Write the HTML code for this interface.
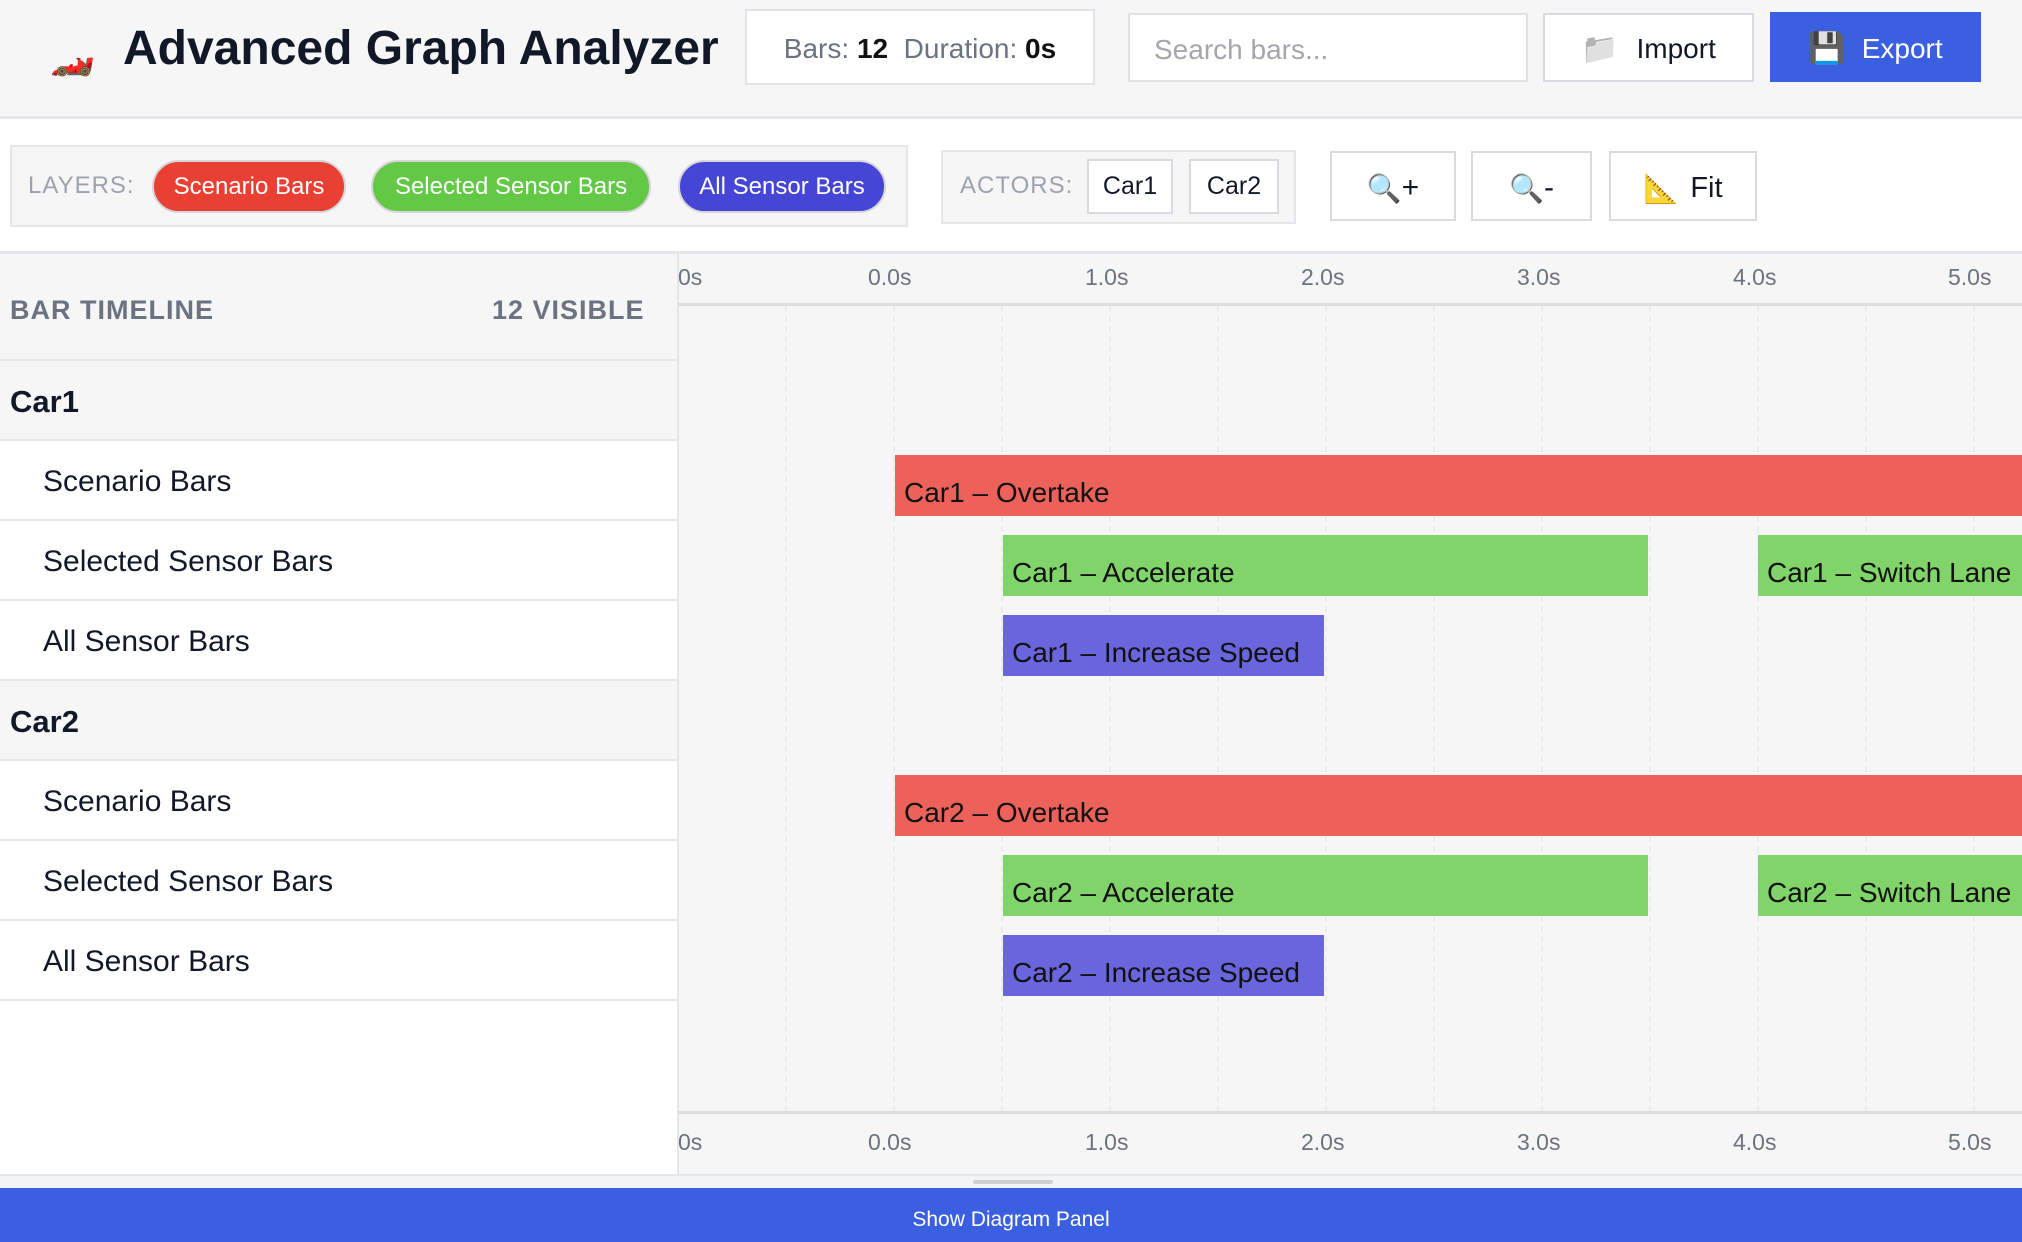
<!DOCTYPE html>
<html><head><meta charset="utf-8">
<style>
*{box-sizing:border-box;margin:0;padding:0}
body{width:2022px;height:1242px;overflow:hidden;background:#fff;font-family:"Liberation Sans",sans-serif;color:#111827;position:relative}
.a{position:absolute}
.hdr{left:0;top:0;width:2022px;height:119px;background:#f6f6f7;border-bottom:3px solid #e5e5ea}
.box{border:2px solid #e1e2e6;background:#fff}
.flex{display:flex;align-items:center;justify-content:center}
.pill{border-radius:28px;color:#fff;font-size:24px;border:2px solid #d6d6da}
.btn{border:2px solid #d9dadf;background:#fff;font-size:28px}
.row{left:0;width:677px;height:80px;border-bottom:2px solid #e5e5ea;display:flex;align-items:center;font-size:30px;padding-top:4px}
.grp{background:#f6f6f7;font-weight:bold;padding-left:10px;font-size:31px}
.sub{background:#fff;padding-left:43px}
.bar{height:61px;font-size:28px;color:#111;padding:22px 0 0 9px;white-space:nowrap;overflow:hidden}
.tl{font-size:23px;color:#6b7280}
.g{position:absolute;width:0;border-left:2px dashed #ececef;top:306px;height:806px}
</style></head><body>
<div class="a hdr"></div>
<div class="a" style="left:50px;top:36px;font-size:36px">🏎️</div>
<div class="a" style="left:123px;top:21px;font-size:48px;font-weight:bold;color:#111827">Advanced Graph Analyzer</div>
<div class="a box flex" style="left:745px;top:9px;width:350px;height:76px;font-size:28px;color:#6b7280;padding-top:4px">Bars:&nbsp;<b style="color:#111">12</b>&nbsp;&nbsp;Duration:&nbsp;<b style="color:#111">0s</b></div>
<div class="a box" style="left:1128px;top:13px;width:400px;height:69px;font-size:28px;color:#a3a6ad;padding:19px 0 0 24px">Search bars...</div>
<div class="a btn flex" style="left:1543px;top:13px;width:211px;height:69px;padding-top:3px"><span style="font-size:30px;margin-right:18px;filter:grayscale(1)">📁</span>Import</div>
<div class="a flex" style="left:1770px;top:12px;width:211px;height:70px;background:#3a5fe0;color:#fff;font-size:28px;padding-top:3px"><span style="font-size:30px;margin-right:16px">💾</span>Export</div>

<div class="a" style="left:10px;top:145px;width:898px;height:82px;background:#f6f6f7;border:2px solid #e5e5ea"></div>
<div class="a" style="left:28px;top:172px;font-size:24px;color:#9ca3af;letter-spacing:1px">LAYERS:</div>
<div class="a pill flex" style="left:152px;top:160px;width:194px;height:53px;background:#ea4034">Scenario Bars</div>
<div class="a pill flex" style="left:371px;top:160px;width:280px;height:53px;background:#63c846">Selected Sensor Bars</div>
<div class="a pill flex" style="left:678px;top:160px;width:208px;height:53px;background:#4545d6">All Sensor Bars</div>

<div class="a" style="left:941px;top:150px;width:355px;height:74px;background:#f6f6f7;border:2px solid #e5e5ea"></div>
<div class="a" style="left:960px;top:172px;font-size:24px;color:#9ca3af;letter-spacing:1px">ACTORS:</div>
<div class="a btn flex" style="left:1087px;top:159px;width:86px;height:55px;font-size:25px">Car1</div>
<div class="a btn flex" style="left:1189px;top:159px;width:90px;height:55px;font-size:25px">Car2</div>
<div class="a btn flex" style="left:1330px;top:151px;width:126px;height:70px;font-size:30px;padding-top:4px"><span style="font-size:28px">🔍</span>+</div>
<div class="a btn flex" style="left:1471px;top:151px;width:121px;height:70px;font-size:30px;padding-top:4px"><span style="font-size:28px">🔍</span>-</div>
<div class="a btn flex" style="left:1609px;top:151px;width:148px;height:70px;font-size:29px;padding-top:4px"><span style="font-size:28px;margin-right:12px">📐</span>Fit</div>

<div class="a" style="left:0;top:251px;width:2022px;height:3px;background:#e5e5ea"></div>
<div class="a" style="left:0;top:254px;width:677px;height:107px;background:#f6f6f7;border-bottom:2px solid #e5e5ea"></div>
<div class="a" style="left:10px;top:295px;font-size:27px;font-weight:bold;color:#6b7280;letter-spacing:1px">BAR TIMELINE</div>
<div class="a" style="left:492px;top:295px;font-size:27px;font-weight:bold;color:#6b7280;letter-spacing:1px">12 VISIBLE</div>

<div class="a row grp" style="top:361px">Car1</div>
<div class="a row sub" style="top:441px">Scenario Bars</div>
<div class="a row sub" style="top:521px">Selected Sensor Bars</div>
<div class="a row sub" style="top:601px">All Sensor Bars</div>
<div class="a row grp" style="top:681px">Car2</div>
<div class="a row sub" style="top:761px">Scenario Bars</div>
<div class="a row sub" style="top:841px">Selected Sensor Bars</div>
<div class="a row sub" style="top:921px">All Sensor Bars</div>

<div class="a" style="left:677px;top:254px;width:1345px;height:922px;background:#f6f6f7;border-left:2px solid #e5e5ea"></div>
<div class="g" style="left:785px"></div><div class="g" style="left:893px"></div><div class="g" style="left:1001px"></div>
<div class="g" style="left:1109px"></div><div class="g" style="left:1217px"></div><div class="g" style="left:1325px"></div>
<div class="g" style="left:1433px"></div><div class="g" style="left:1541px"></div><div class="g" style="left:1649px"></div>
<div class="g" style="left:1757px"></div><div class="g" style="left:1865px"></div><div class="g" style="left:1973px"></div>
<div class="a" style="left:678px;top:303px;width:1344px;height:3px;background:#dcdde1"></div>
<div class="a" style="left:678px;top:1111px;width:1344px;height:3px;background:#dcdde1"></div>

<div class="a tl" style="left:678px;top:264px">0s</div>
<div class="a tl" style="left:868px;top:264px">0.0s</div>
<div class="a tl" style="left:1085px;top:264px">1.0s</div>
<div class="a tl" style="left:1301px;top:264px">2.0s</div>
<div class="a tl" style="left:1517px;top:264px">3.0s</div>
<div class="a tl" style="left:1733px;top:264px">4.0s</div>
<div class="a tl" style="left:1948px;top:264px">5.0s</div>
<div class="a tl" style="left:678px;top:1129px">0s</div>
<div class="a tl" style="left:868px;top:1129px">0.0s</div>
<div class="a tl" style="left:1085px;top:1129px">1.0s</div>
<div class="a tl" style="left:1301px;top:1129px">2.0s</div>
<div class="a tl" style="left:1517px;top:1129px">3.0s</div>
<div class="a tl" style="left:1733px;top:1129px">4.0s</div>
<div class="a tl" style="left:1948px;top:1129px">5.0s</div>

<div class="a bar" style="left:895px;top:455px;width:1127px;background:#ec625a">Car1 – Overtake</div>
<div class="a bar" style="left:1003px;top:535px;width:645px;background:#80d46a">Car1 – Accelerate</div>
<div class="a bar" style="left:1758px;top:535px;width:264px;background:#80d46a">Car1 – Switch Lane</div>
<div class="a bar" style="left:1003px;top:615px;width:321px;background:#6965dc">Car1 – Increase Speed</div>
<div class="a bar" style="left:895px;top:775px;width:1127px;background:#ec625a">Car2 – Overtake</div>
<div class="a bar" style="left:1003px;top:855px;width:645px;background:#80d46a">Car2 – Accelerate</div>
<div class="a bar" style="left:1758px;top:855px;width:264px;background:#80d46a">Car2 – Switch Lane</div>
<div class="a bar" style="left:1003px;top:935px;width:321px;background:#6965dc">Car2 – Increase Speed</div>

<div class="a" style="left:0;top:1174px;width:2022px;height:14px;background:#f3f4f6;border-top:2px solid #e5e5ea"></div>
<div class="a" style="left:973px;top:1180px;width:80px;height:4px;background:#cfd0d4;border-radius:2px"></div>
<div class="a flex" style="left:0;top:1188px;width:2022px;height:54px;background:#3a5fe0;color:#fff;font-size:21px;padding-top:10px">Show Diagram Panel</div>
</body></html>
